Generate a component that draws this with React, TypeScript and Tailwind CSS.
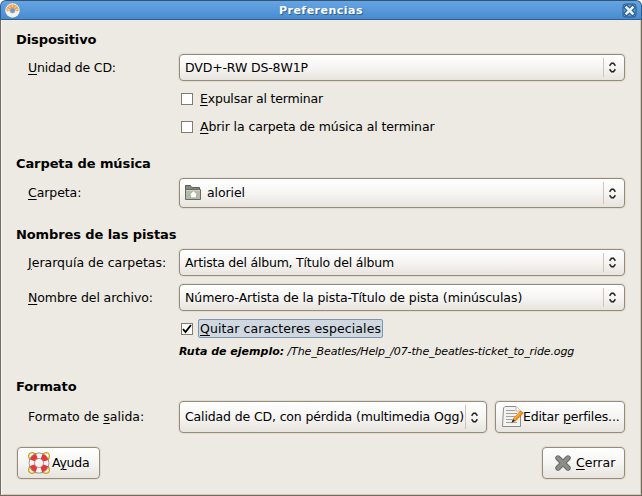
import type { ReactNode } from "react";

const box =
  "rounded-[4px] border border-[#978b7c] bg-gradient-to-b from-white via-[#f6f5f3] to-[#e8e4de] shadow-[0_0_0_1px_rgba(170,160,145,0.18)]";

function Key({ children }: { children: ReactNode }) {
  return <span className="underline decoration-1 underline-offset-[2px]">{children}</span>;
}

function Heading({ children }: { children: ReactNode }) {
  return <h2 className="flex h-5 items-center pl-[15px] text-[13px] font-bold tracking-[-0.1px]">{children}</h2>;
}

function Row({ label, tracking = "", children }: { label: ReactNode; tracking?: string; children: ReactNode }) {
  return (
    <div className="mt-1 flex items-center">
      <div className={`w-[178px] shrink-0 pl-[27px] ${tracking}`}>{label}</div>
      {children}
    </div>
  );
}

function Arrows() {
  return (
    <svg className="h-[11px] w-[7px] shrink-0" viewBox="0 0 7 11" fill="none" stroke="#222" strokeWidth="1.500">
      <path d="M.6 3.800 2.500 1.300H4.500L6.400 3.800M.6 7.200 2.500 9.700H4.500L6.400 7.200" />
    </svg>
  );
}

function Combo({ size, children }: { size: string; children: ReactNode }) {
  return (
    <button className={`flex items-center pl-[5px] pr-2 text-left ${size} ${box}`}>
      <span className="flex min-w-0 flex-1 items-center whitespace-nowrap">{children}</span>
      <span className="my-[3px] mr-[5px] w-px shrink-0 self-stretch bg-[#cfc4b6]" />
      <Arrows />
    </button>
  );
}

function Check({ checked = false }: { checked?: boolean }) {
  return (
    <span className="flex size-3 shrink-0 items-center justify-center border border-[#857a6d] bg-white">
      {checked && (
        <svg className="size-[10px]" viewBox="0 0 10 10" fill="none" stroke="#000" strokeWidth="1.9">
          <path d="M1 5 3.500 8 9 1" />
        </svg>
      )}
    </span>
  );
}

function HomeFolder() {
  return (
    <svg className="mr-[6px] size-4 shrink-0" viewBox="0 0 16 16">
      <path d="M.5 .5h5l1 2h8v4H.5z" fill="#868a7c" stroke="#5b5f55" />
      <path d="M.5 4.500h15v10H.5z" fill="#b6baa9" stroke="#666a60" />
      <path d="M1 5.500h14" stroke="#d0d3c7" />
      <path d="m8.500 5.800 4.300 4H11.500v3h-6v-3H4.200z" fill="#fdfdf9" stroke="#8b8f82" strokeWidth=".5" />
    </svg>
  );
}

function Lifebuoy() {
  return (
    <svg className="size-[22px] shrink-0" viewBox="0 0 22 22" fill="none">
      <g stroke="#cfa712" strokeWidth="1.300">
        <circle cx="4" cy="4" r="3.400" /><circle cx="18" cy="4" r="3.400" />
        <circle cx="4" cy="18" r="3.400" /><circle cx="18" cy="18" r="3.400" />
      </g>
      <circle cx="11" cy="11" r="7.200" stroke="#7d7d7b" strokeWidth="6.400" />
      <circle cx="11" cy="11" r="7.200" stroke="#f4f4f2" strokeWidth="5" />
      <circle cx="11" cy="11" r="7.200" stroke="#ea3535" strokeWidth="5" strokeDasharray="6.300 5.010" strokeDashoffset="-2.500" />
    </svg>
  );
}

function EditSheet() {
  return (
    <svg className="size-[22px] shrink-0" viewBox="0 0 22 22">
      <path d="M3 .5h11l4.500 4.500v15.500H.5L1.500 2z" fill="#f3f3f1" stroke="#8b8d88" />
      <path d="M14 .5V5h4.500" fill="#fff" stroke="#b4b6b1" />
      <path d="M4 4.500h9M4 7.500h11M4 10.500h9M4 13.500h6M4 16.500h11" stroke="#a0a29d" />
      <path d="m10.800 13.200 7-7.500q2-.7 3.500 1.300l-7.800 8z" fill="#f98a12" stroke="#c06200" strokeWidth=".6" />
      <path d="m12.200 13 6.700-6.900" stroke="#fcb040" strokeWidth="1.200" />
      <path d="m9.400 16.700 1.500-3.500 2.300 1.700z" fill="#222" />
    </svg>
  );
}

export default function App() {
  return (
    <main className="flex h-[496px] w-[642px] flex-col overflow-hidden bg-white font-['DejaVu_Sans',sans-serif] text-[12.5px] leading-4 text-black">
      <header className="flex h-5 shrink-0 items-center rounded-t-[6px] border border-[#315f90] border-t-[#34536f] bg-gradient-to-b from-[#66a5e4] to-[#478bcf] px-1">
        <svg className="mt-px size-[15px]" viewBox="0 0 15 15">
          <circle cx="7.500" cy="7.500" r="7.200" fill="#f6f4f0" />
          <path d="M1.200 7.500a6.300 6.300 0 0 1 12.600 0l-1.800 1-1.500-1.500-6 0L3 8.500z" fill="#f2a44e" />
          <path d="M4 3.300l1 1.500M7.500 1.800v2M11 3.300 10 4.800M2.200 6.200l2 .5M12.800 6.200l-2 .5" stroke="#fbe3c4" strokeWidth=".8" />
          <circle cx="7.500" cy="7.500" r="2.500" fill="#5f9ad6" stroke="#b3aca4" />
        </svg>
        <h1 className="flex-1 pt-px text-center text-[11px] font-bold tracking-[0.5px] text-white [text-shadow:1px_1px_0_#315f90]">Preferencias</h1>
        <svg className="size-[15px]" viewBox="0 0 15 15">
          <rect x="1" y="1" width="13" height="13" rx="2.500" fill="#5a98d5" stroke="#28578a" />
          <path d="m4.500 4.500 6 6m0-6-6 6" stroke="#28578a" strokeWidth="4.600" strokeLinecap="square" />
          <path d="m4.500 4.500 6 6m0-6-6 6" stroke="#e9f1f9" strokeWidth="2.600" strokeLinecap="square" />
        </svg>
      </header>
      <div className="flex-1 border-x border-b border-[#746a60] bg-[#ede9e3] bg-[#edeae3] pr-4 pt-[10px] shadow-[inset_1px_0_0_#f8f6f2,inset_-1px_-1px_0_#d2c9bd]">
        <Heading>Dispositivo</Heading>
        <Row tracking="tracking-[-0.18px]" label={<><Key>U</Key>nidad de CD:</>}>
          <Combo size="h-[27px] w-[446px] tracking-[-0.14px]">DVD+-RW DS-8W1P</Combo>
        </Row>
        <div className="mt-2 flex h-5 items-center gap-[7px] pl-[180px] tracking-[-0.2px]"><Check /><span><Key>E</Key>xpulsar al terminar</span></div>
        <div className="mt-2 flex h-5 items-center gap-[7px] pl-[180px] tracking-[-0.1px]"><Check /><span><Key>A</Key>brir la carpeta de música al terminar</span></div>
        <div className="h-[17px]" />
        <Heading>Carpeta de música</Heading>
        <Row tracking="tracking-[-0.08px]" label={<><Key>C</Key>arpeta:</>}>
          <Combo size="h-[30px] w-[446px] tracking-[-0.1px]"><HomeFolder />aloriel</Combo>
        </Row>
        <div className="h-[17px]" />
        <Heading>Nombres de las pistas</Heading>
        <Row label={<><Key>J</Key>erarquía de carpetas:</>}>
          <Combo size="h-[27px] w-[446px] tracking-[-0.22px]">Artista del álbum, Título del álbum</Combo>
        </Row>
        <div className="h-1" />
        <Row tracking="tracking-[-0.1px]" label={<><Key>N</Key>ombre del archivo:</>}>
          <Combo size="h-[27px] w-[446px] tracking-[-0.07px]">Número-Artista de la pista-Título de pista (minúsculas)</Combo>
        </Row>
        <div className="mt-2 flex h-[19px] items-center pl-[180px]">
          <Check checked />
          <span className="ml-[5px] h-[19px] w-[185px] whitespace-nowrap rounded-[2px] border border-[#7c96b1] bg-[#cfd8e0] pl-px leading-[17px] tracking-[0.1px]"><Key>Q</Key>uitar caracteres especiales</span>
        </div>
        <p className="mt-[5px] h-[18px] pl-[178px] text-[11px] italic leading-[18px]"><b>Ruta de ejemplo:</b><span className="tracking-[-0.12px]"> /The_Beatles/Help_/07-the_beatles-ticket_to_ride.ogg</span></p>
        <div className="h-4" />
        <Heading>Formato</Heading>
        <Row label={<>Formato de <Key>s</Key>alida:</>}>
          <Combo size="h-8 w-[308px] tracking-[-0.14px]">Calidad de CD, con pérdida (multimedia Ogg)</Combo>
          <button className={`ml-2 flex h-8 w-[130px] items-center whitespace-nowrap pl-[6px] tracking-[-0.15px] ${box}`}><EditSheet /><span className="-ml-px">Editar <Key>p</Key>erfiles...</span></button>
        </Row>
        <footer className="mt-[14px] flex justify-between pl-4">
          <button className={`flex h-8 w-[83px] items-center gap-[2px] pl-[10px] tracking-[-0.25px] ${box}`}><Lifebuoy /><span>A<Key>y</Key>uda</span></button>
          <button className={`flex h-8 w-[83px] items-center gap-[5px] pl-3 ${box}`}>
            <svg className="size-4" viewBox="0 0 16 16"><path d="m3 3 10 10m0-10L3 13" stroke="#666864" strokeWidth="5.400" strokeLinecap="round" /><path d="m3 3 10 10m0-10L3 13" stroke="#8b8d88" strokeWidth="3.600" strokeLinecap="round" /></svg>
            <span><Key>C</Key>errar</span>
          </button>
        </footer>
      </div>
    </main>
  );
}
